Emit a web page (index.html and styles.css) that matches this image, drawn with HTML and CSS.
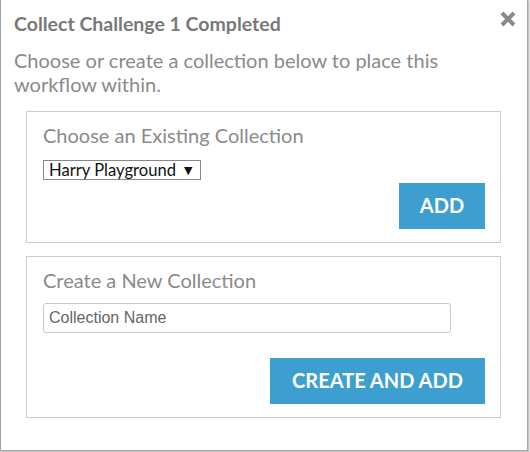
FILE: index.html
```html
<!DOCTYPE html>
<html>
<head>
<meta charset="utf-8">
<link rel="stylesheet" href="styles.css">
</head>
<body>
<div class="dialog">
  <div class="header">
    <h1 class="title">Collect Challenge 1 Completed</h1>
    <span class="close" aria-label="Close">
      <svg width="16" height="16" viewBox="0 0 16 16"><path d="M2 2 L14 14 M14 2 L2 14" stroke="#888" stroke-width="4" stroke-linecap="butt" fill="none"/></svg>
    </span>
  </div>
  <p class="intro">Choose or create a collection below to place this workflow within.</p>

  <div class="panel panel-existing">
    <h2 class="panel-title">Choose an Existing Collection</h2>
    <div class="select"><span>Harry Playground</span><span class="caret">▼</span></div>
    <div class="actions actions-existing">
      <button class="btn btn-add">ADD</button>
    </div>
  </div>

  <div class="panel panel-new">
    <h2 class="panel-title">Create a New Collection</h2>
    <input class="name-input" type="text" placeholder="Collection Name">
    <div class="actions actions-new">
      <button class="btn btn-create">CREATE AND ADD</button>
    </div>
  </div>
</div>
</body>
</html>
```

FILE: styles.css
```css
html, body {
  margin: 0;
  padding: 0;
}
body {
  background: #e2e2e2;
  font-family: Lato, "Open Sans", sans-serif;
  width: 530px;
  height: 452px;
  overflow: hidden;
}
.dialog {
  box-sizing: border-box;
  width: 528px;
  height: 451px;
  background: #fff;
  border-left: 1px solid #a0a0a0;
  border-right: 1px solid #a8a8a8;
  border-bottom: 1px solid #a8a8a8;
  box-shadow: 1px 1px 0 #c4c4c4;
  padding: 13px 13px 0 13px;
}
.header {
  display: flex;
  justify-content: space-between;
  align-items: flex-start;
}
.title {
  margin: 0;
  font-size: 19.5px;
  line-height: 22px;
  font-weight: 700;
  color: #787878;
}
.close {
  display: block;
  width: 16px;
  height: 16px;
  margin-top: -2px;
  margin-right: -2px;
}
.close svg {
  display: block;
}
.intro {
  margin: 13px 0 0 0;
  font-size: 20px;
  line-height: 24px;
  color: #8a8a8a;
  width: 460px;
}
.panel {
  box-sizing: border-box;
  width: 475px;
  margin-left: 12px;
  border: 1px solid #cccccc;
  padding: 11px 15px 13px 16px;
}
.panel-existing {
  margin-top: 15px;
}
.panel-new {
  margin-top: 13px;
}
.panel-title {
  margin: 0;
  font-size: 20px;
  line-height: 24px;
  font-weight: 400;
  color: #8a8a8a;
}
.select {
  box-sizing: border-box;
  display: flex;
  align-items: center;
  width: 158px;
  height: 20px;
  margin-top: 13px;
  border: 1px solid #888;
  padding: 0 0 0 5px;
  font-size: 16.6px;
  color: #111;
}
.caret {
  font-size: 11px;
  margin-left: 8px;
  font-family: "DejaVu Sans", sans-serif;
}
.actions {
  display: flex;
  justify-content: flex-end;
}
.actions-existing {
  margin-top: 3px;
}
.actions-new {
  margin-top: 25px;
}
.btn {
  box-sizing: border-box;
  height: 46px;
  border: none;
  background: #3c9fcf;
  color: #fff;
  font-family: Lato, sans-serif;
  font-weight: 700;
  font-size: 20px;
  padding: 0 0 3px 0;
  margin: 0;
}
.btn-add {
  width: 86px;
}
.btn-create {
  width: 215px;
}
.name-input {
  box-sizing: border-box;
  display: block;
  width: 408px;
  height: 30px;
  margin-top: 11px;
  border: 1px solid #c8c8c8;
  border-radius: 3px;
  padding: 0 5px;
  font-family: "Liberation Sans", Arial, sans-serif;
  font-size: 16px;
  outline: none;
}
.name-input::placeholder {
  color: #666;
  opacity: 1;
}
```
